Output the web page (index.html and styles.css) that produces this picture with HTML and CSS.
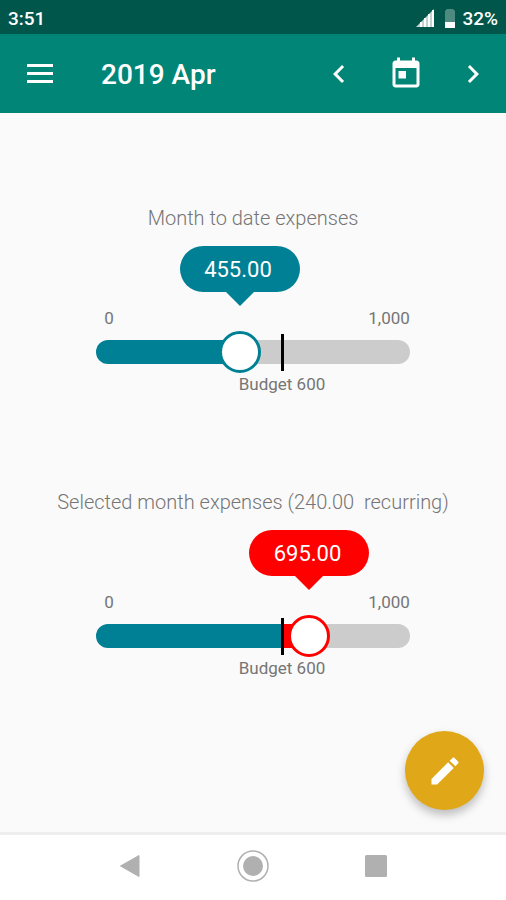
FILE: index.html
```
<!DOCTYPE html>
<html lang="en">
<head>
<meta charset="utf-8">
<meta name="viewport" content="width=device-width, initial-scale=1">
<title>2019 Apr</title>
<link rel="stylesheet" href="styles.css">
</head>
<body>
	<div class="statusbar">
		<span class="clock">3:51</span>
		<svg class="signal" viewBox="0 0 18 18">
			<path d="M0 18 18 0V18z" fill="#fff" opacity=".75"/>
			<path d="M5 13V18M9 9V18M13 5V18M17 1V18" stroke="#fff" stroke-width="2"/>
		</svg>
		<svg class="battery" viewBox="0 0 12 20">
			<path d="M1 3 3 1H9L11 3V20H1z" fill="#4f8a81"/>
			<path d="M1 14H11V20H1z" fill="#fff"/>
		</svg>
		<span>32%</span>
	</div>

	<header class="toolbar">
		<button type="button" aria-label="Menu">
			<svg viewBox="0 0 36 36"><path d="M5 8H31V11H5zM5 16H31V19H5zM5 24H31V27H5z"/></svg>
		</button>
		<h1>2019 Apr</h1>
		<button type="button" aria-label="Previous month">
			<svg viewBox="0 0 24 24"><path d="M15.41 7.41 14 6l-6 6 6 6 1.41-1.41L10.83 12z"/></svg>
		</button>
		<button type="button" aria-label="Pick month">
			<svg viewBox="0 0 24 24"><path d="M19 3h-1V1h-2v2H8V1H6v2H5c-1.11 0-1.99.9-1.99 2L3 19c0 1.1.89 2 2 2h14c1.1 0 2-.9 2-2V5c0-1.1-.9-2-2-2zm0 16H5V8h14v11zM7 10h5v5H7z"/></svg>
		</button>
		<button type="button" aria-label="Next month">
			<svg viewBox="0 0 24 24"><path d="M10 6 8.59 7.41 13.17 12l-4.58 4.59L10 18l6-6z"/></svg>
		</button>
	</header>

	<main>
		<section class="gauge" style="--value: .455; --budget: .6; --safe: .455">
			<label for="todate">Month to date expenses</label>
			<div class="scale">
				<div class="bubblerow"><output class="bubble" for="todate">455.00</output></div>
				<div class="limits"><span>0</span><span>1,000</span></div>
				<div class="track">
					<span class="mark"></span>
					<input type="range" id="todate" min="0" max="1000" value="455">
				</div>
				<div class="budgetrow"><span class="budget">Budget 600</span></div>
			</div>
		</section>

		<section class="gauge over" style="--value: .695; --budget: .6; --safe: .6">
			<label for="selected">Selected month expenses (240.00&nbsp; recurring)</label>
			<div class="scale">
				<div class="bubblerow"><output class="bubble" for="selected">695.00</output></div>
				<div class="limits"><span>0</span><span>1,000</span></div>
				<div class="track">
					<span class="mark"></span>
					<input type="range" id="selected" min="0" max="1000" value="695">
				</div>
				<div class="budgetrow"><span class="budget">Budget 600</span></div>
			</div>
		</section>

		<button type="button" class="fab" aria-label="Add expense">
			<svg viewBox="0 0 24 24"><path d="M3 17.25V21h3.75L17.81 9.94l-3.75-3.75L3 17.25zM20.71 7.04c.39-.39.39-1.02 0-1.41l-2.34-2.34c-.39-.39-1.02-.39-1.41 0l-1.83 1.83 3.75 3.75 1.83-1.83z"/></svg>
		</button>
	</main>

	<nav class="navbar">
		<button type="button" aria-label="Back">
			<svg viewBox="0 0 32 32"><path d="M6.500 16 25 5.500V26.500z" stroke="#b0b0b0" stroke-linejoin="round"/></svg>
		</button>
		<button type="button" aria-label="Home">
			<svg viewBox="0 0 32 32"><circle cx="16" cy="16" r="10"/><circle cx="16" cy="16" r="15" fill="none" stroke="#b0b0b0" stroke-width="1.500"/></svg>
		</button>
		<button type="button" aria-label="Recent apps">
			<svg viewBox="0 0 32 32"><rect x="5" y="5" width="22" height="22" rx="1.500"/></svg>
		</button>
	</nav>
</body>
</html>
```

FILE: styles.css
```
* {
	box-sizing: border-box;
}

body {
	display: flex;
	flex-direction: column;
	min-height: 100vh;
	margin: 0;
	background: #fafafa;
	color: #757575;
	font-family: Roboto, "Liberation Sans", sans-serif;
}

button {
	padding: 0;
	border: 0;
	background: none;
	cursor: pointer;
}

svg {
	display: block;
}

/* top bars */
.statusbar {
	display: flex;
	align-items: center;
	height: 34px;
	padding: 2px 8px 0;
	background: #00564a;
	color: #fff;
	font-size: 19px;
	font-weight: 500;
}

.clock {
	flex: 1;
}

.signal {
	width: 18px;
	height: 18px;
	margin-right: 10px;
}

.battery {
	width: 12px;
	height: 20px;
	margin-right: 6px;
}

.toolbar {
	display: flex;
	align-items: center;
	gap: 31px;
	height: 79px;
	padding: 0 15px 0 22px;
	background: #008577;
	color: #fff;
}

.toolbar svg {
	width: 36px;
	height: 36px;
	fill: #fff;
}

.toolbar h1 {
	flex: 1;
	margin: 0 0 0 12px;
	padding-top: 2px;
	font-size: 28px;
	font-weight: 500;
}

/* gauges */
main {
	position: relative;
	display: flex;
	flex: 1;
	flex-direction: column;
	gap: 93px;
	padding: 91px 0;
}

.gauge {
	--main: #008094;
	--tip: #008094;
	--pos: calc(12px + (100% - 24px) * var(--value));
	--budgetpos: calc(12px + (100% - 24px) * var(--budget));
	text-align: center;
}

.gauge.over {
	--tip: #f00;
}

.gauge label {
	display: block;
	height: 42px;
	font-size: 20px;
	font-weight: 300;
	line-height: 28px;
}

.scale {
	width: 62%;
	margin: 0 auto;
	font-size: 17px;
	line-height: 22px;
}

.bubblerow {
	position: relative;
	height: 61px;
}

.bubble {
	position: absolute;
	left: var(--pos);
	width: 120px;
	padding: 1px 4px 0 0;
	border-radius: 23px;
	background: var(--tip);
	color: #fff;
	font-size: 22px;
	line-height: 45px;
	transform: translateX(-50%);
}

.bubble::after {
	content: "";
	position: absolute;
	top: 100%;
	left: 50%;
	margin-left: -14px;
	border: 14px solid transparent;
	border-top-color: var(--tip);
	border-bottom: 0;
}

.limits {
	display: flex;
	justify-content: space-between;
	height: 33px;
	padding-left: 8px;
}

.track {
	position: relative;
	display: flex;
	align-items: center;
	height: 24px;
	border-radius: 12px;
	background: linear-gradient(to right,
		var(--main) calc(12px + (100% - 24px) * var(--safe)),
		var(--tip) calc(12px + (100% - 24px) * var(--safe)) var(--pos),
		#ccc var(--pos));
}

.mark {
	position: absolute;
	left: var(--budgetpos);
	width: 3px;
	height: 37px;
	margin-left: -1px;
	background: #000;
}

.track input {
	position: relative;
	flex: none;
	width: calc(100% + 18px);
	height: 42px;
	margin: 0 -9px;
	background: none;
	-webkit-appearance: none;
	appearance: none;
}

.track input::-webkit-slider-thumb {
	width: 42px;
	height: 42px;
	border: 3px solid var(--tip);
	border-radius: 50%;
	background: #fff;
	-webkit-appearance: none;
}

.budgetrow {
	display: flex;
	padding-top: 9px;
}

.budget {
	margin-left: var(--budgetpos);
	transform: translateX(-50%);
}

.fab {
	position: absolute;
	right: 22px;
	bottom: 22px;
	display: grid;
	place-items: center;
	width: 79px;
	height: 79px;
	border-radius: 50%;
	background: #e0a818;
	box-shadow: 0 5px 10px rgba(0, 0, 0, .25);
}

.fab svg {
	width: 36px;
	height: 36px;
	fill: #fff;
}

/* system navigation */
.navbar {
	display: flex;
	justify-content: center;
	gap: 18%;
	height: 68px;
	padding-bottom: 3px;
	border-top: 3px solid #eee;
	background: #fff;
}

.navbar svg {
	width: 32px;
	height: 32px;
	fill: #b0b0b0;
}
```
